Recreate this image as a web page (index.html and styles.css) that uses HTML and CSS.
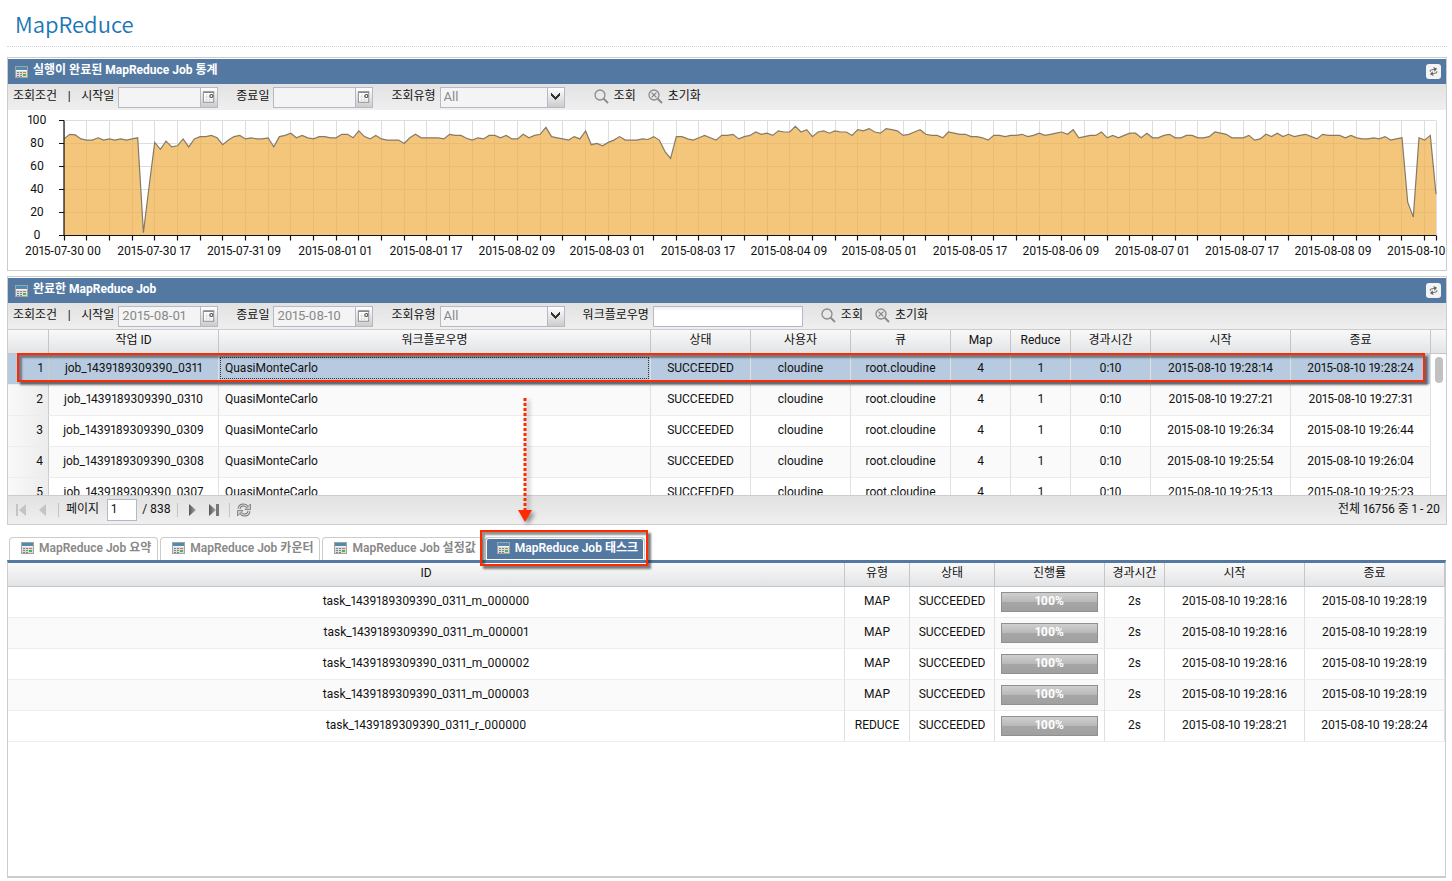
FILE: index.html
```html
<!DOCTYPE html>
<html lang="ko">
<head>
<meta charset="utf-8">
<title>MapReduce</title>
<link rel="stylesheet" href="styles.css">
</head>
<body>
<svg class="defs" width="0" height="0" aria-hidden="true">
  <defs>
    <linearGradient id="calc-top" x1="0" y1="0" x2="0" y2="1"><stop offset="0" stop-color="#3f8fbd"/><stop offset="1" stop-color="#5f87a5"/></linearGradient>
    <linearGradient id="arrow-fill" x1="0" y1="0" x2="1" y2="0"><stop offset="0" stop-color="#555"/><stop offset="1" stop-color="#aaa"/></linearGradient>
    <symbol id="calc" viewBox="0 0 13 12">
      <rect x="0.5" y="0.5" width="12" height="11" fill="#dcdcdc" stroke="#a2a4a2"/>
      <rect x="1" y="1" width="11" height="3" fill="url(#calc-top)"/>
      <rect x="1" y="4" width="11" height="1" fill="#f4f4f4"/>
      <g fill="#7d8488"><rect x="2" y="6" width="2" height="1"/><rect x="5" y="6" width="2" height="1"/><rect x="2" y="8" width="2" height="1"/><rect x="5" y="8" width="2" height="1"/><rect x="2" y="10" width="2" height="1"/><rect x="5" y="10" width="2" height="1"/></g>
      <rect x="8" y="6" width="3" height="1" fill="#e46a5c"/><rect x="8" y="8" width="3" height="2" fill="#35c04a"/>
    </symbol>
    <symbol id="swap" viewBox="0 0 15 15">
      <g transform="rotate(-12 7.5 7.5)"><g fill="none" stroke="#777" stroke-width="1.1"><path d="M4.300 7.200V6.800Q4.300 5.600 5.500 5.600H9"/><path d="M10.700 7.800v.4Q10.700 9.400 9.500 9.400H6"/></g>
      <path d="M8.400 3.200 11.600 5.600 8.400 8zM6.600 7 3.400 9.400l3.200 2.400z" fill="#666"/></g>
    </symbol>
    <symbol id="cal" viewBox="0 0 17 19">
      <rect x="2.500" y="3.500" width="11" height="11" fill="#fff" stroke="#888"/>
      <path d="M3 4h11" stroke="#888" stroke-width="1.500"/>
      <path d="M6 6v8M9 6v8M4 9h9M4 12h9" stroke="#ddd"/>
      <circle cx="11" cy="8" r="1.600" fill="#fff" stroke="#444" stroke-width="1.100"/>
    </symbol>
    <symbol id="find" viewBox="0 0 15 15">
      <circle cx="6" cy="6" r="5" fill="none" stroke="#8c8c8c" stroke-width="1.300"/><path d="M9.500 9.500 14 14" stroke="#8c8c8c" stroke-width="1.800"/>
    </symbol>
    <symbol id="clear" viewBox="0 0 15 15">
      <circle cx="6" cy="6" r="5" fill="none" stroke="#8c8c8c" stroke-width="1.300"/><path d="M9.500 9.500 14 14" stroke="#8c8c8c" stroke-width="2"/><path d="m3.600 3.600 4.800 4.800m0-4.800L3.600 8.400" stroke="#888" stroke-width="1.300"/>
    </symbol>
  </defs>
</svg>

<div class="page">
  <h1 class="title">MapReduce</h1>

  <section class="panel stats">
    <header class="panel-head">
      <svg class="calc"><use href="#calc"/></svg>
      <h2>실행이 완료된 MapReduce Job 통계</h2>
      <button class="swap" type="button" aria-label="새로고침"><svg><use href="#swap"/></svg></button>
    </header>
    <form class="toolbar">
      <span class="caption">조회조건</span><span class="bar">|</span>
      <div class="field"><label for="s1">시작일</label><span class="combo date"><input id="s1" type="text" disabled><button type="button" disabled aria-label="달력"><svg><use href="#cal"/></svg></button></span></div>
      <div class="field"><label for="e1">종료일</label><span class="combo date"><input id="e1" type="text" disabled><button type="button" disabled aria-label="달력"><svg><use href="#cal"/></svg></button></span></div>
      <div class="field"><label for="t1">조회유형</label><select id="t1" class="type" disabled><option>All</option></select></div>
      <div class="actions">
        <button type="button"><svg><use href="#find"/></svg>조회</button>
        <button type="button"><svg><use href="#clear"/></svg>초기화</button>
      </div>
    </form>
    <svg class="chart" id="chart" viewBox="8 110 1438 160" role="img" aria-label="MapReduce Job 통계"></svg>
  </section>

  <section class="panel jobs">
    <header class="panel-head">
      <svg class="calc"><use href="#calc"/></svg>
      <h2>완료한 MapReduce Job</h2>
      <button class="swap" type="button" aria-label="새로고침"><svg><use href="#swap"/></svg></button>
    </header>
    <form class="toolbar">
      <span class="caption">조회조건</span><span class="bar">|</span>
      <div class="field"><label for="s2">시작일</label><span class="combo date"><input id="s2" type="text" value="2015-08-01" disabled><button type="button" disabled aria-label="달력"><svg><use href="#cal"/></svg></button></span></div>
      <div class="field"><label for="e2">종료일</label><span class="combo date"><input id="e2" type="text" value="2015-08-10" disabled><button type="button" disabled aria-label="달력"><svg><use href="#cal"/></svg></button></span></div>
      <div class="field"><label for="t2">조회유형</label><select id="t2" class="type" disabled><option>All</option></select></div>
      <div class="field"><label for="w2">워크플로우명</label><input id="w2" class="name" type="text"></div>
      <div class="actions near">
        <button type="button"><svg><use href="#find"/></svg>조회</button>
        <button type="button"><svg><use href="#clear"/></svg>초기화</button>
      </div>
    </form>
    <div class="viewport">
      <table class="grid">
        <colgroup><col class="w41"><col class="w170"><col><col class="w100"><col class="w100"><col class="w100"><col class="w60"><col class="w60"><col class="w80"><col class="w140"><col class="w140"></colgroup>
        <thead><tr><th></th><th>작업 ID</th><th>워크플로우명</th><th>상태</th><th>사용자</th><th>큐</th><th>Map</th><th>Reduce</th><th>경과시간</th><th>시작</th><th>종료</th></tr></thead>
        <tbody>
          <tr class="selected"><td class="num">1</td><td>job_1439189309390_0311</td><td class="focus"><div>QuasiMonteCarlo</div></td><td>SUCCEEDED</td><td>cloudine</td><td>root.cloudine</td><td>4</td><td>1</td><td>0:10</td><td>2015-08-10 19:28:14</td><td>2015-08-10 19:28:24</td></tr>
          <tr class="alt"><td class="num">2</td><td>job_1439189309390_0310</td><td class="left">QuasiMonteCarlo</td><td>SUCCEEDED</td><td>cloudine</td><td>root.cloudine</td><td>4</td><td>1</td><td>0:10</td><td>2015-08-10 19:27:21</td><td>2015-08-10 19:27:31</td></tr>
          <tr><td class="num">3</td><td>job_1439189309390_0309</td><td class="left">QuasiMonteCarlo</td><td>SUCCEEDED</td><td>cloudine</td><td>root.cloudine</td><td>4</td><td>1</td><td>0:10</td><td>2015-08-10 19:26:34</td><td>2015-08-10 19:26:44</td></tr>
          <tr class="alt"><td class="num">4</td><td>job_1439189309390_0308</td><td class="left">QuasiMonteCarlo</td><td>SUCCEEDED</td><td>cloudine</td><td>root.cloudine</td><td>4</td><td>1</td><td>0:10</td><td>2015-08-10 19:25:54</td><td>2015-08-10 19:26:04</td></tr>
          <tr><td class="num">5</td><td>job_1439189309390_0307</td><td class="left">QuasiMonteCarlo</td><td>SUCCEEDED</td><td>cloudine</td><td>root.cloudine</td><td>4</td><td>1</td><td>0:10</td><td>2015-08-10 19:25:13</td><td>2015-08-10 19:25:23</td></tr>
        </tbody>
      </table>
      <div class="gutter"><div class="gutter-head"></div><div class="thumb"></div></div>
      <div class="mark mark-row"></div>
    </div>
    <footer class="pager">
      <button type="button" disabled aria-label="첫 페이지"><svg viewBox="0 0 14 14"><path d="M2 1h2v12H2zM12 1v12L5 7z" fill="#c4c4c4"/></svg></button>
      <button type="button" disabled aria-label="이전"><svg viewBox="0 0 14 14"><path d="M10 1v12L3 7z" fill="#c4c4c4"/></svg></button>
      <i class="sep"></i>
      <label for="pg">페이지</label><input id="pg" type="text" value="1"><span class="total">/ 838</span>
      <i class="sep"></i>
      <button type="button" aria-label="다음"><svg viewBox="0 0 14 14"><path d="M4 1v12l7-6z" fill="url(#arrow-fill)"/></svg></button>
      <button type="button" aria-label="마지막 페이지"><svg viewBox="0 0 14 14"><path d="M2 1v12l7-6z" fill="url(#arrow-fill)"/><path d="M9 1h3v12H9z" fill="#777"/></svg></button>
      <i class="sep"></i>
      <button type="button" aria-label="새로고침"><svg viewBox="0 0 14 14"><path d="M2 6Q2.500 2 6.500 2q2.500 0 3.800 2M12 8q-.5 4-4.500 4Q5 12 3.700 10" fill="none" stroke="#777" stroke-width="3"/><path d="M2 6Q2.500 2 6.500 2q2.500 0 3.800 2M12 8q-.5 4-4.500 4Q5 12 3.700 10" fill="none" stroke="#ddd" stroke-width="1.200"/><path d="M13.500 1v5.500H8zM.5 13V7.500H6z" fill="#ccc" stroke="#777" stroke-width=".8"/></svg></button>
      <span class="range">전체 16756 중 1 - 20</span>
    </footer>
    <svg class="pointer" width="20" height="128" viewBox="0 0 20 128" aria-hidden="true"><path d="M8 1v113" stroke="#ff2a00" stroke-width="3" stroke-dasharray="3 2"/><path d="M1 113h14l-7 12z" fill="#ff2a00"/></svg>
  </section>

  <nav class="tabs" role="tablist">
    <button type="button" role="tab"><svg class="calc"><use href="#calc"/></svg>MapReduce Job 요약</button>
    <button type="button" role="tab"><svg class="calc"><use href="#calc"/></svg>MapReduce Job 카운터</button>
    <button type="button" role="tab"><svg class="calc"><use href="#calc"/></svg>MapReduce Job 설정값</button>
    <div class="active-tab"><button type="button" role="tab" aria-selected="true" class="on"><svg class="calc"><use href="#calc"/></svg>MapReduce Job 태스크</button><div class="mark mark-tab"></div></div>
  </nav>

  <section class="tasks">
    <table class="grid">
      <colgroup><col><col class="w65"><col class="w85"><col class="w110"><col class="w60"><col class="w140"><col class="w140"></colgroup>
      <thead><tr><th>ID</th><th>유형</th><th>상태</th><th>진행률</th><th>경과시간</th><th>시작</th><th>종료</th></tr></thead>
      <tbody>
        <tr><td>task_1439189309390_0311_m_000000</td><td>MAP</td><td>SUCCEEDED</td><td class="prog"><div class="progress">100%</div></td><td>2s</td><td>2015-08-10 19:28:16</td><td>2015-08-10 19:28:19</td></tr>
        <tr class="alt"><td>task_1439189309390_0311_m_000001</td><td>MAP</td><td>SUCCEEDED</td><td class="prog"><div class="progress">100%</div></td><td>2s</td><td>2015-08-10 19:28:16</td><td>2015-08-10 19:28:19</td></tr>
        <tr><td>task_1439189309390_0311_m_000002</td><td>MAP</td><td>SUCCEEDED</td><td class="prog"><div class="progress">100%</div></td><td>2s</td><td>2015-08-10 19:28:16</td><td>2015-08-10 19:28:19</td></tr>
        <tr class="alt"><td>task_1439189309390_0311_m_000003</td><td>MAP</td><td>SUCCEEDED</td><td class="prog"><div class="progress">100%</div></td><td>2s</td><td>2015-08-10 19:28:16</td><td>2015-08-10 19:28:19</td></tr>
        <tr><td>task_1439189309390_0311_r_000000</td><td>REDUCE</td><td>SUCCEEDED</td><td class="prog"><div class="progress">100%</div></td><td>2s</td><td>2015-08-10 19:28:21</td><td>2015-08-10 19:28:24</td></tr>
      </tbody>
    </table>
  </section>
</div>
<script src="chart.js"></script>
</body>
</html>
```
FILE: styles.css
```css
* { box-sizing: border-box; }
body {
  margin: 0;
  background: #fff;
  color: #111;
  font: 12px/16px Roboto, "Noto Sans CJK KR", sans-serif;
  font-variant-numeric: proportional-nums;
}
button, input, select { font: inherit; font-variant-numeric: inherit; color: inherit; margin: 0; }
button { padding: 0; border: 0; background: none; }
.defs { position: absolute; }
.page {
  display: flex;
  flex-direction: column;
  min-height: 100vh;
  padding: 0 5px 3px 7px;
}
.title {
  margin: 0 0 10px;
  height: 47px;
  padding: 7px 8px 0;
  border-bottom: 1px dotted #d4d4d4;
  color: #1b75b5;
  font-family: "Noto Sans CJK KR", sans-serif;
  font-size: 22px;
  line-height: 32px;
  font-weight: 350;
}

/* Panels */
.panel { border: 1px solid #ccc; margin-bottom: 5px; }
.panel-head {
  display: flex;
  align-items: center;
  height: 25px;
  margin-top: 1px;
  padding: 0 5px 0 7px;
  background: #5379a2;
  color: #fff;
}
.panel-head h2 { flex: 1; margin: 0 0 3px 5px; font-size: 12px; line-height: 18px; }
.calc { width: 13px; height: 12px; }
.swap { width: 15px; height: 15px; border-radius: 3px; background: #f4f4f4; }
.swap svg { display: block; width: 15px; height: 15px; }

/* Search toolbar */
.toolbar {
  display: flex;
  align-items: center;
  height: 26px;
  padding: 0 5px;
  background: linear-gradient(#e2e2e2, #efefef);
  white-space: nowrap;
}
.bar { width: 24px; text-align: center; margin-bottom: 3px; }
.caption, .field label { margin-bottom: 2px; }
.field { display: flex; align-items: center; gap: 4px; margin-right: 18px; }
.combo { display: flex; width: 100px; height: 21px; border: 1px solid #b5b8c8; background: #f4f4f4; }
.combo input { flex: 1; min-width: 0; padding: 0 3px; border: 0; background: none; color: #888; font-size: 13px; }
.combo button { width: 17px; border-left: 1px solid #b5b8c8; background: linear-gradient(#fff, #ccc); }
.combo svg { display: block; width: 16px; height: 19px; }
.type {
  width: 125px;
  height: 21px;
  padding: 0 3px;
  border: 1px solid #b5b8c8;
  border-radius: 0;
  opacity: 1;
  color: #888;
  font-size: 13px;
  appearance: none;
  background:
    linear-gradient(45deg, transparent 4px, #333 4px 6px, transparent 6px) right 8px top 5px / 5px 8px no-repeat,
    linear-gradient(-45deg, transparent 4px, #333 4px 6px, transparent 6px) right 4px top 5px / 5px 8px no-repeat,
    linear-gradient(#b5b8c8, #b5b8c8) right 16px top 0 / 1px 100% no-repeat,
    linear-gradient(#fff, #ccc) right 0 top 0 / 16px 100% no-repeat,
    #f4f4f4;
}
.name { width: 150px; height: 21px; border: 1px solid #b5b8c8; background: linear-gradient(#eee, #fff 4px); }
.actions { display: flex; gap: 12px; margin: 0 0 2px 11px; }
.actions.near { margin-left: 0; }
.actions button { display: flex; align-items: center; gap: 5px; }
.actions svg { width: 15px; height: 15px; }
.chart { display: block; width: 100%; }
.chart text { font-size: 12px; fill: #111; }

/* Grids */
.grid { width: 100%; table-layout: fixed; border-collapse: separate; border-spacing: 0; }
.grid th {
  height: 24px;
  padding: 0 0 3px;
  font-weight: 400;
  background: linear-gradient(#f9f9f9, #e3e4e6);
  border-right: 1px solid #c5c5c5;
  border-bottom: 1px solid #c5c5c5;
}
.grid td {
  height: 31px;
  padding: 0 0 3px;
  text-align: center;
  white-space: nowrap;
  border-right: 1px solid #e0e0e0;
  border-bottom: 1px solid #ededed;
}
.grid .alt td { background: #fafafa; }
.grid .left { text-align: left; padding-left: 6px; }
.grid td.num { text-align: right; padding-right: 5px; background: linear-gradient(90deg, #f9f9f9, #ececec); border-right-color: #ccc; }
.grid .selected td { background: #b8cae0; }
.focus div { padding: 2px 4px; margin: 0 1px; border: 1px dotted #333; text-align: left; }
.w41 { width: 41px; }
.w60 { width: 60px; }
.w65 { width: 65px; }
.w80 { width: 80px; }
.w85 { width: 85px; }
.w100 { width: 100px; }
.w110 { width: 110px; }
.w140 { width: 140px; }
.w170 { width: 170px; }
.viewport { position: relative; display: flex; align-items: flex-start; height: 166px; border-top: 1px solid #ccc; overflow: hidden; }
.gutter { width: 15px; flex: none; }
.gutter-head { height: 24px; background: linear-gradient(#f9f9f9, #e3e4e6); border-bottom: 1px solid #c5c5c5; }
.thumb { width: 8px; height: 26px; margin: 3px 0 0 4px; border-radius: 4px; background: #c1c1c1; }

/* Pager */
.pager {
  display: flex;
  align-items: center;
  height: 29px;
  padding: 0 6px;
  border-top: 1px solid #ccc;
  background: linear-gradient(#e2e2e2, #efefef);
}
.pager button { width: 14px; height: 14px; margin-right: 8px; }
.pager button svg { display: block; width: 14px; height: 14px; }
.pager label, .total, .range { margin-bottom: 2px; }
.sep { width: 1px; height: 14px; margin-right: 7px; background: #c9c5b5; }
.pager input { width: 30px; height: 22px; margin: 0 5px 0 8px; padding: 0 3px 3px; border: 1px solid #b5b8c8; }
.total { margin-right: 6px; }
.range { margin-left: auto; }

/* Tabs */
.tabs { display: flex; gap: 2px; height: 23px; margin-top: 7px; padding: 0 2px; }
.tabs button {
  display: flex;
  align-items: center;
  gap: 5px;
  height: 23px;
  padding: 0 6px 2px 11px;
  border: 1px solid #ccc;
  border-bottom: 0;
  border-radius: 4px 4px 0 0;
  color: #888;
  font-weight: 600;
  white-space: nowrap;
}
.active-tab { position: relative; }
.tabs .on { background: #5379a2; color: #fff; box-shadow: inset 0 0 0 1px #fff; }
.tasks { flex: 1; margin-right: 1px; border: 1px solid #ccc; border-top: 3px solid #5379a2; border-bottom: 2px solid #ccc; }
.prog .progress {
  height: 20px;
  margin: 3px 6px 0;
  border: 1px solid #909090;
  background: linear-gradient(#cfcfcf, #b8b8b8 50%, #a6a6a6 50%, #a0a0a0);
  color: #fff;
  font-weight: 700;
  line-height: 16px;
}

/* Callouts */
.mark {
  position: absolute;
  border: 2px solid #ff2a00;
  box-shadow: 3px 3px 2px rgba(40, 40, 40, .6), inset 3px 3px 2px rgba(40, 40, 40, .5);
  pointer-events: none;
}
.mark-row { left: 9px; right: 21px; top: 23px; height: 29px; }
.mark-tab { left: -5px; right: -3px; top: -7px; height: 36px; }
.jobs { position: relative; }
.pointer { position: absolute; left: 509px; bottom: -1px; filter: drop-shadow(3px 3px 2px rgba(0, 0, 0, .4)); }
```
FILE: chart.js
```js
const values = [
  84, 88, 87.5, 84, 83, 83, 85, 83, 84, 83, 84, 83, 84, 85, 2.5, 42, 81, 75, 82, 77,
  78, 84, 77, 84, 86, 86, 87, 85, 79, 83, 86, 87, 84, 85, 84, 84, 85, 77, 86, 87,
  89, 85, 87, 85, 84, 86, 86, 85, 85, 88, 88, 85, 91, 86, 84, 87, 84, 83, 83, 83,
  80, 85, 88, 85, 85, 85, 85, 84, 88, 87, 87, 84.5, 83, 85, 84, 87, 87, 85, 87, 84,
  84, 88, 85, 87, 88, 94, 86, 85, 84, 83, 86, 84, 91, 79, 80, 78, 81, 83, 86, 83,
  83, 83, 84, 83.5, 86, 83, 73, 67, 86, 86, 84, 83, 85, 87, 85, 83, 87, 87, 88, 84,
  86, 87, 90, 88, 89, 87, 91, 90, 90, 95, 90, 92, 86, 90, 91, 89, 91, 90, 90, 87,
  92, 91, 93, 90, 89, 93, 92, 91, 87, 88, 90, 92, 88, 87, 87, 85, 90, 89, 88, 88,
  86, 86, 85, 83, 87, 87, 86, 87, 87, 88, 86, 87, 89, 87, 88, 89, 90, 88, 92, 85,
  86, 87, 87, 90, 85, 87, 85, 87, 89, 89, 85, 89, 85, 85, 87, 88, 85, 85, 87, 87,
  85, 85, 86, 90, 89, 88, 85, 85, 85, 87, 83, 84, 88, 86, 89, 86, 88, 86, 87, 88,
  86, 84, 88, 87, 87, 87, 85, 87, 85, 84, 84, 85, 84, 86, 83, 84, 85, 29, 16, 85,
  83, 87, 36
];
const labels = ['2015-07-30 00', '2015-07-30 17', '2015-07-31 09', '2015-08-01 01', '2015-08-01 17',
  '2015-08-02 09', '2015-08-03 01', '2015-08-03 17', '2015-08-04 09', '2015-08-05 01',
  '2015-08-05 17', '2015-08-06 09', '2015-08-07 01', '2015-08-07 17', '2015-08-08 09'];

const left = 64, right = 1436, bottom = 235.5, unit = 1.15;
const step = (right - left) / (values.length - 1);
const px = i => left + i * step;
const py = v => bottom - v * unit;
const line = values.map((v, i) => `${i ? 'L' : 'M'}${px(i).toFixed(1)} ${py(v).toFixed(1)}`).join('');

let grid = '', ticks = '', text = '';
for (let i = 0; i < values.length + 3; i += 4) {
  const x = Math.floor(px(Math.min(i, values.length - 1))) + 0.5;
  grid += `M${x} ${py(100)}V${bottom}`;
  ticks += `M${x} ${bottom}v5`;
}
for (let v = 0; v <= 100; v += 20) {
  grid += `M${left} ${Math.round(py(v)) - 0.5}H${right}`;
  ticks += `M59 ${Math.round(py(v)) - 0.5}H${left}`;
  text += `<text x="37" y="${Math.round(py(v)) + 3}" text-anchor="middle">${v}</text>`;
}
labels.forEach((t, i) => {
  text += `<text x="${Math.round(px(i * 16)) - 1}" y="255" text-anchor="middle">${t}</text>`;
});
text += '<text x="1387" y="255">2015-08-10</text>';

document.getElementById('chart').innerHTML =
  `<path d="${grid}" fill="none" stroke="#ddd"/>` +
  `<path d="${line}V${bottom}H${left}Z" fill="#f0ae45" fill-opacity=".7"/>` +
  `<path d="${line}" fill="none" stroke="#857a66" stroke-width="1.2"/>` +
  `<path d="M${left} 120.500V${bottom}H${right}${ticks}" fill="none" stroke="#111" stroke-width="1.2"/>` + text;
```
